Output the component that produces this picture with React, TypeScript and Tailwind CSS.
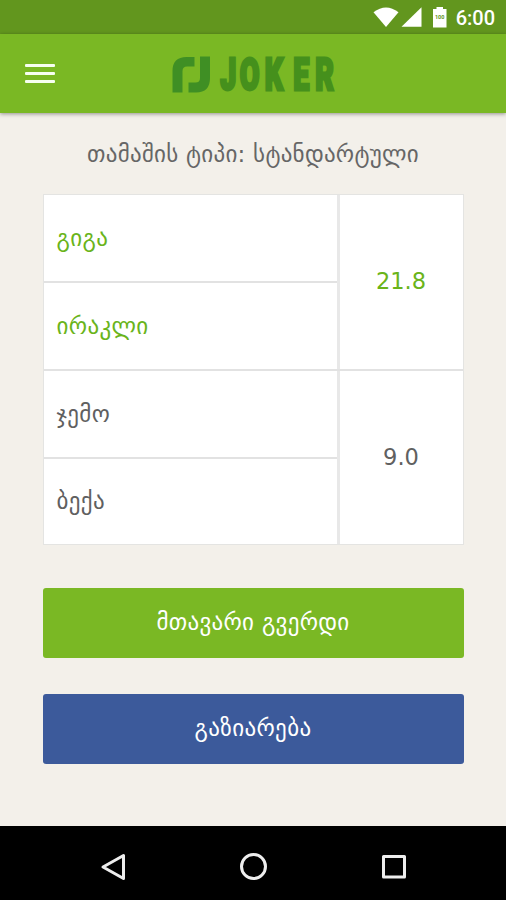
interface Team {
  players: string[];
  score: string;
  isWinner: boolean;
}

const teams: Team[] = [
  { players: ['გიგა', 'ირაკლი'], score: '21.8', isWinner: true },
  { players: ['ჯემო', 'ბექა'], score: '9.0', isWinner: false },
];

function StatusBar() {
  return (
    <div className="flex h-[34px] items-center justify-end bg-[#62961e] pr-[11px] text-white">
      <svg className="h-[22px] w-[80px]" viewBox="0 0 80 22" fill="currentColor">
        {/* Wifi */}
        <path d="M0.500 6.200Q13 -3.200 25.500 6.200L13 21Z" />
        {/* Signal */}
        <path d="M48.500 1.200V20.800H28.500Z" />
        {/* Battery */}
        <path d="M63.500 1H70V3H73.500V21.500H60V3H63.500Z" />
        <text x="66.700" y="12.500" textAnchor="middle" fontSize="5.500" fontWeight="700" fill="#62961e" fontFamily="Roboto">
          100
        </text>
      </svg>
      <span className="ml-[3px] pt-[2px] font-['Roboto',sans-serif] text-[20px] leading-none font-medium">6:00</span>
    </div>
  );
}

function Header() {
  return (
    <div className="relative z-10 flex h-[79px] items-center bg-[#7ab824] pl-[25px] shadow-[0_1px_4px_rgba(0,0,0,0.4)]">
      <button className="flex w-[30px] flex-col gap-[5px]">
        <span className="h-[3px] rounded-[1px] bg-[#f6fff0]" />
        <span className="h-[3px] rounded-[1px] bg-[#f6fff0]" />
        <span className="h-[3px] rounded-[1px] bg-[#f6fff0]" />
      </button>

      {/* Logo */}
      <svg className="ml-[115px] h-[60px] w-[190px]" viewBox="0 -10 190 60">
        <g fill="#3f8f24">
          <path d="M2.500 38.500V17Q2.500 3 16.500 3H24.500V12.500H17Q12.500 12.500 12.500 17V38.500Z" />
          <path d="M40 2.500V24Q40 38.500 26 38.500H18.500V28.500H25.500Q30 28.500 30 24V2.500Z" />
        </g>
        <text
          x="77.500 107.500 145.700 189.500 223.500"
          y="36"
          transform="scale(0.65 1)"
          fontFamily="Roboto"
          fontSize="44"
          fontWeight="900"
          fill="#45901c"
          stroke="#45901c"
          strokeWidth="3"
        >
          JOKER
        </text>
      </svg>
    </div>
  );
}

function ScoreTable() {
  return (
    <div className="mt-[25px] border border-[#e4e4e2] bg-white">
      {teams.map((team, idx) => (
        <div
          key={team.score}
          className={`flex ${idx > 0 ? 'h-[173px]' : 'h-[176px] border-b-2 border-[#e2e2e2]'} ${
            team.isWinner ? 'text-[#6ab41a]' : 'text-[#606060]'
          }`}
        >
          <div className="flex w-[296px] flex-col border-r-3 border-[#e8e8e8]">
            {team.players.map((player, i) => (
              <div
                key={player}
                className={`flex flex-1 items-center pl-[13px] text-[23px] tracking-[0.35px] ${
                  i > 0 ? '' : 'border-b-2 border-[#e2e2e2]'
                }`}
              >
                {player}
              </div>
            ))}
          </div>
          <div className="flex flex-1 items-center justify-center text-[22.5px]">{team.score}</div>
        </div>
      ))}
    </div>
  );
}

function NavBar() {
  return (
    <div className="flex h-[74px] items-center justify-between bg-black px-[99px] pt-[7px]">
      <svg className="size-[28px]" viewBox="0 0 28 28" fill="none" stroke="#eee" strokeWidth="3" strokeLinejoin="round">
        <path d="M24.500 2.500V25.500L4 14Z" />
      </svg>
      <svg className="size-[28px]" viewBox="0 0 28 28" fill="none" stroke="#eee" strokeWidth="3">
        <circle cx="14.500" cy="13.500" r="12" />
      </svg>
      <svg className="size-[28px]" viewBox="0 0 28 28" fill="none" stroke="#eee" strokeWidth="3" strokeLinejoin="round">
        <rect x="4.500" y="3.500" width="21" height="20.500" />
      </svg>
    </div>
  );
}

export default function App() {
  return (
    <div className="flex h-[900px] w-[506px] flex-col bg-[#f3f0ea] font-['DejaVu_Sans',sans-serif]">
      <StatusBar />
      <Header />

      <div className="flex flex-1 flex-col px-[42.5px] pt-[26px]">
        <h1 className="h-[30px] text-center text-[23px] leading-[30px] tracking-[0.25px] whitespace-nowrap text-[#666]">
          თამაშის ტიპი: სტანდარტული
        </h1>
        <ScoreTable />
        <button className="mt-[43px] h-[70px] rounded-[3px] bg-[#7ab824] pb-[2px] text-[23px] tracking-[0.3px] text-white">
          მთავარი გვერდი
        </button>
        <button className="mt-[36px] h-[70px] rounded-[3px] bg-[#3c5a9b] pb-[2px] text-[23px] tracking-[0.35px] text-white">
          გაზიარება
        </button>
      </div>

      <NavBar />
    </div>
  );
}
